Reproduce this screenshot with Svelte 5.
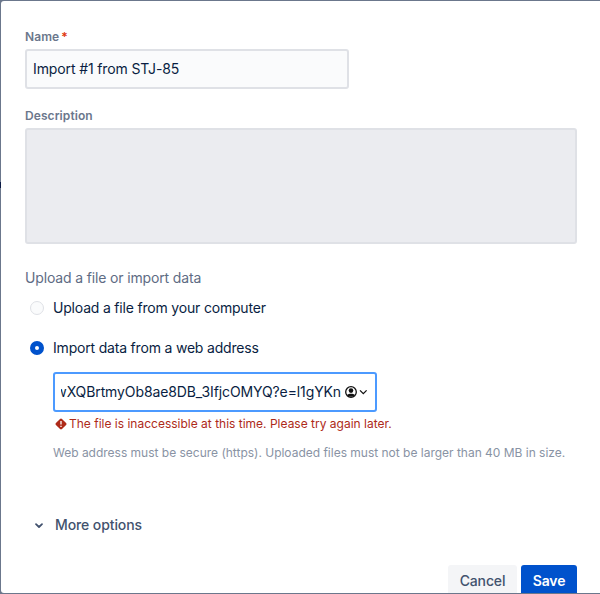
<!--
  @component ImportDialog
  @fileoverview Dialog form for importing data from a file or a web address.
-->
<script lang="ts">
  // ===========================================================================
  //  State
  // ===========================================================================

  let name = $state('Import #1 from STJ-85');
  let source = $state('web');
  let address = $state('wXQBrtmyOb8ae8DB_3IfjcOMYQ?e=l1gYKn');
  let error = $state('The file is inaccessible at this time. Please try again later.');

  const sources = [
    { id: 'file', label: 'Upload a file from your computer' },
    { id: 'web', label: 'Import data from a web address' }
  ];
</script>

<div class="backdrop">
  <span class="page-edge"></span>
  <form class="dialog">
    <label class="label name-label" for="name">Name<span class="required">*</span></label>
    <input id="name" class="text-field" bind:value={name} />

    <label class="label description-label" for="description">Description</label>
    <textarea id="description" class="description" disabled></textarea>

    <div class="legend"><span>Upload a file or import data</span></div>
    {#each sources as item (item.id)}
      <label class="option {item.id}">
        <input class="radio" type="radio" name="source" value={item.id} bind:group={source} />
        <span class="option-text">{item.label}</span>
      </label>
    {/each}

    <div class="web-source">
      <div class="address-field">
        <div class="address"><span>{address}</span></div>
        <svg class="account" width="24" height="14" viewBox="0 0 24 14" fill="none">
          <circle cx="7" cy="7" r="5.3" stroke="#111" stroke-width="1.3" />
          <circle cx="7" cy="5.6" r="2.3" fill="#111" />
          <path d="M3.1 10.1C4.6 8.3 9.4 8.3 10.9 10.1C9.6 12.2 4.4 12.2 3.1 10.1Z" fill="#111" />
          <path d="M16 5.4L19.3 8.7L22.6 5.4" stroke="#111" stroke-width="1.3" />
        </svg>
      </div>
      <div class="error">
        <svg width="12" height="12" viewBox="0 0 12 12">
          <path d="M5 0.9Q6 0 7 0.9L11.1 5Q12 6 11.1 7L7 11.1Q6 12 5 11.1L0.9 7Q0 6 0.9 5Z" fill="#ae2a19" />
          <path d="M6 3V6.6M6 7.8V9.1" stroke="#fff" stroke-width="1.3" />
        </svg>
        <span class="error-text">{error}</span>
      </div>
      <p class="help"><span>Web address must be secure (https). Uploaded files must not be larger than 40 MB in size.</span></p>
    </div>

    <button class="more" type="button">
      <svg width="10" height="8" viewBox="0 0 10 8" fill="none">
        <path d="M2 3.2L5 6L8 3.2" stroke="#42526e" stroke-width="1.8" stroke-linecap="round" stroke-linejoin="round" />
      </svg>
      <span class="more-text">More options</span>
    </button>

    <div class="actions">
      <button class="button cancel" type="button">Cancel</button>
      <button class="button save" type="button">Save</button>
    </div>
  </form>
</div>

<style>
  :global(body) {
    overflow: hidden;
  }

  .backdrop {
    position: relative;
    box-sizing: border-box;
    height: 594px;
    padding: 1px 0 1px 1px;
    background: #6b778c;
    font-family: Inter, 'Liberation Sans', sans-serif;
    font-size: 14px;
    color: #091e42;
  }

  /* Page content showing through beside the dialog */
  .page-edge {
    position: absolute;
    left: 0;
    top: 182px;
    width: 1px;
    height: 6px;
    background: #0b1a45;
  }

  .dialog {
    box-sizing: border-box;
    display: flex;
    flex-direction: column;
    height: 592px;
    padding: 28px 23px 0 24px;
    overflow: hidden;
    background: #fff;
    border-radius: 3px 0 0 3px;
  }

  .dialog > * {
    flex-shrink: 0;
  }

  input,
  textarea,
  button {
    box-sizing: border-box;
    margin: 0;
    font: inherit;
    color: inherit;
  }

  .label {
    height: 16px;
    font-size: 12px;
    font-weight: 600;
    line-height: 16px;
    letter-spacing: 0.08px;
    color: #6b778c;
  }

  .name-label {
    margin-bottom: 4px;
  }

  .required {
    padding-left: 2px;
    color: #de350b;
  }

  .text-field {
    width: 324px;
    height: 40px;
    padding: 0 6px 2px;
    border: 2px solid #dfe1e6;
    border-radius: 3px;
    background: #fafbfc;
    letter-spacing: -0.12px;
  }

  .description-label {
    margin: 19px 0 4px;
  }

  .description {
    height: 116px;
    border: 2px solid #dfe1e6;
    border-radius: 3px;
    background: #ebecf0;
    resize: none;
  }

  .legend {
    margin-top: 24px;
    line-height: 20px;
    letter-spacing: -0.15px;
    color: #5e6c84;
  }

  .option {
    display: flex;
    align-items: center;
    height: 20px;
    padding-left: 5px;
    gap: 9px;
    letter-spacing: -0.19px;
  }

  .option-text,
  .error-text,
  .more-text {
    padding-bottom: 2px;
  }

  .file {
    margin: 10px 0 20px;
  }

  .radio {
    width: 14px;
    height: 14px;
    appearance: none;
    border: 1.5px solid #dfe1e6;
    border-radius: 50%;
    background: #fafbfc;
  }

  .radio:checked {
    border: 5px solid #0052cc;
    background: #fff;
  }

  .web-source {
    margin: 14px 0 0 28px;
  }

  .address-field {
    box-sizing: border-box;
    display: flex;
    align-items: center;
    width: 324px;
    height: 40px;
    padding-left: 6px;
    border: 2px solid #4c9aff;
    border-radius: 3px;
  }

  /* Scrolled to the end, so the start of the address is cut off */
  .address {
    display: flex;
    justify-content: flex-end;
    width: 280px;
    overflow: hidden;
    line-height: 20px;
    letter-spacing: -0.11px;
    white-space: nowrap;
  }

  .account {
    margin-left: 3px;
  }

  .error {
    display: flex;
    align-items: center;
    height: 16px;
    margin-top: 4px;
    padding-left: 2px;
    gap: 2px;
    font-size: 12px;
    white-space: nowrap;
    color: #ae2a19;
  }

  .help {
    margin: 13px 0 0;
    font-size: 12px;
    line-height: 16px;
    letter-spacing: -0.01px;
    white-space: nowrap;
    color: #8993a4;
  }

  .more {
    display: flex;
    align-items: center;
    align-self: flex-start;
    height: 32px;
    margin-top: 48px;
    padding: 0 0 0 9px;
    gap: 11px;
    border: 0;
    background: none;
    font-weight: 500;
    letter-spacing: -0.1px;
    color: #42526e;
  }

  .actions {
    display: flex;
    justify-content: flex-end;
    margin-top: 24px;
    gap: 4px;
  }

  .button {
    flex: none;
    height: 32px;
    padding: 0 0 2px;
    border: 0;
    border-radius: 3px;
    font-weight: 500;
    letter-spacing: -0.15px;
  }

  .cancel {
    width: 69px;
    background: #f4f5f7;
    color: #42526e;
  }

  .save {
    width: 56px;
    background: #0052cc;
    font-weight: 600;
    color: #fff;
  }
</style>
